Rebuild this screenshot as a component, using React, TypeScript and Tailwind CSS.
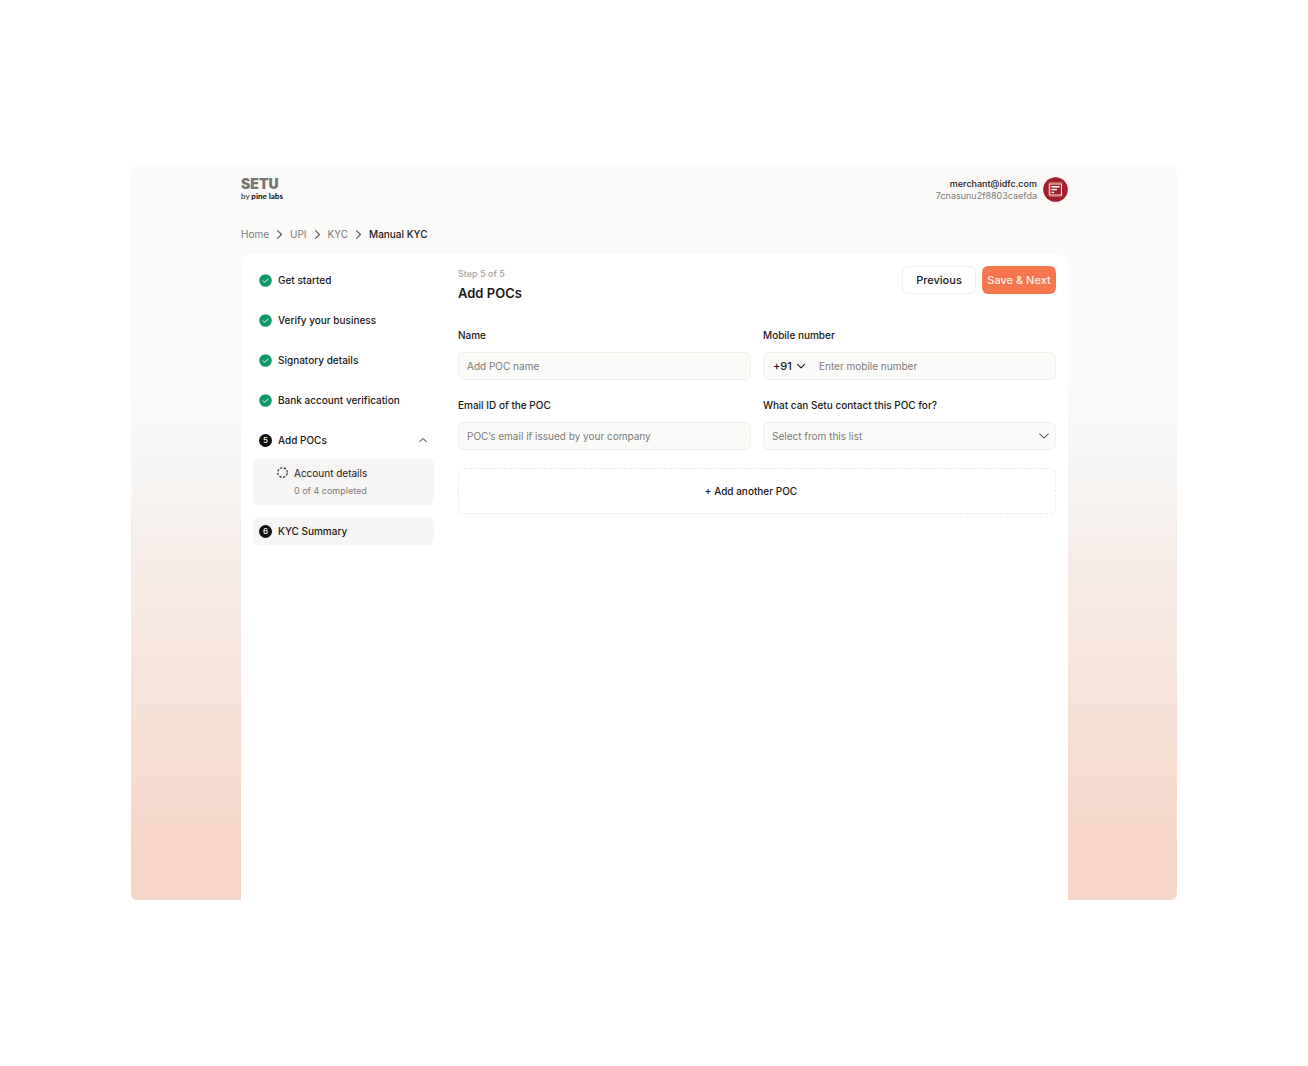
import { Fragment, type ReactNode } from "react";

const FIELD =
  "h-7 w-full rounded-md border border-[#f6ece8] bg-[#fafaf8] text-[10px] text-[#1a1918] outline-none placeholder:text-[#7d7b79] placeholder:opacity-100";

function Chevron({ className, d, width = 1 }: { className: string; d: string; width?: number }) {
  return (
    <svg className={className} viewBox="0 0 10 10" fill="none" stroke="currentColor" strokeWidth={width} strokeLinecap="round" strokeLinejoin="round" aria-hidden="true">
      <path d={d} />
    </svg>
  );
}

function CheckBadge() {
  return (
    <svg className="size-[13px] shrink-0" viewBox="0 0 13 13" fill="none" aria-hidden="true">
      <circle cx="6.5" cy="6.5" r="6.3" fill="#0f9968" />
      <path d="M4 6.8 5.7 8.3 9.1 5" stroke="#e4f3ed" strokeWidth="1" strokeLinecap="round" strokeLinejoin="round" />
    </svg>
  );
}

function NumberBadge({ value }: { value: number }) {
  return (
    <span className="flex size-[13px] shrink-0 items-center justify-center rounded-full bg-[#0d0d0d] text-[8px] leading-none font-medium text-white">
      {value}
    </span>
  );
}

function StepButton({ icon, label, active, open }: { icon: ReactNode; label: string; active?: boolean; open?: boolean }) {
  return (
    <button
      type="button"
      aria-expanded={open}
      className={`flex h-7 w-full items-center gap-[6px] rounded-md px-[6px] text-left text-[10px] font-medium ${active ? "bg-[#f6f5f3]" : ""}`}
    >
      {icon}
      <span>{label}</span>
      {open && <Chevron className="ml-auto size-[10px]" d="M1.8 6.6 5 3.4 8.2 6.6" />}
    </button>
  );
}

function Field({ id, label, children }: { id: string; label: string; children: ReactNode }) {
  return (
    <div className="flex min-w-0 flex-col gap-2">
      <label htmlFor={id} className="text-[10px] leading-[18px] font-medium">
        {label}
      </label>
      {children}
    </div>
  );
}

function Logo() {
  return (
    <a href="#" aria-label="Setu by Pine Labs" className="flex flex-col pt-px">
      <span className="text-[14px] leading-3 font-black text-[#777573]">SETU</span>
      <span className="mt-px font-['Lato'] text-[8px] leading-[10px] text-[#1a1918]">
        by <b className="font-black">pine labs</b>
      </span>
    </a>
  );
}

function Avatar() {
  return (
    <svg className="size-[25px] shrink-0" viewBox="0 0 25 25" fill="none" aria-hidden="true">
      <circle cx="12.5" cy="12.5" r="12.3" fill="#a31f2d" />
      <path d="M6.5 5.6h12.6M6.5 19.4h12.6" stroke="#e8a88f" strokeWidth="1" strokeDasharray="1 1" />
      <path d="M6.5 7h12v11h-12z" stroke="#fbeee9" strokeWidth="1.1" />
      <path d="M6.5 7v11" stroke="#f3bfae" strokeWidth="1.6" />
      <path d="M8.5 9.8h8" stroke="#fff" strokeWidth="1.6" />
      <path d="M8.5 12.6h5.5" stroke="#fff" strokeWidth="1.4" />
      <path d="M8.5 15.4h2.6" stroke="#fff" strokeWidth="1.4" />
    </svg>
  );
}

const DONE = ["Get started", "Verify your business", "Signatory details", "Bank account verification"];
const CRUMBS = ["Home", "UPI", "KYC"];

export default function App() {
  return (
    <div className="flex min-h-screen flex-col bg-white px-[131px] pt-[165px] pb-[166px] font-['Inter',sans-serif] text-[#1a1918]">
      <div className="flex flex-1 flex-col rounded-md bg-[linear-gradient(to_bottom,#fafaf8_30%,#f6f4f2_43%,#f6ebe6_55%,#f6e3da_72%,#f7dcd0_82%,#f6d6c9_93%)] pr-[109px] pl-[110px]">
        <header className="flex items-start justify-between pt-3">
          <Logo />
          <div className="flex items-center gap-[6px]">
            <div className="text-right text-[9px] leading-3">
              <div className="font-medium">merchant@idfc.com</div>
              <div className="text-[#7d7b79]">7cnasunu2f8803caefda</div>
            </div>
            <Avatar />
          </div>
        </header>

        <nav aria-label="Breadcrumb" className="mt-6 flex h-4 items-center gap-[5px] text-[10px] text-[#7d7b79]">
          {CRUMBS.map((crumb) => (
            <Fragment key={crumb}>
              <a href="#">{crumb}</a>
              <Chevron className="size-[11px] text-[#555]" d="M3.2 1.5 6.8 5 3.2 8.5" />
            </Fragment>
          ))}
          <span aria-current="page" className="font-medium text-[#1a1918]">Manual KYC</span>
        </nav>

        <div className="mt-3 flex flex-1 gap-6 rounded-t-xl bg-white p-3">
          <aside className="flex w-[181px] shrink-0 flex-col gap-3">
            {DONE.map((label) => (
              <StepButton key={label} icon={<CheckBadge />} label={label} />
            ))}
            <div>
              <StepButton icon={<NumberBadge value={5} />} label="Add POCs" open />
              <a href="#" className="mt-[5px] flex h-[46px] gap-[6px] rounded-md bg-[#f6f5f3] pt-[5px] pl-6">
                <svg className="mt-[3px] size-[11px] shrink-0" viewBox="0 0 11 11" fill="none" aria-hidden="true">
                  <circle cx="5.5" cy="5.5" r="4.8" stroke="#1a1918" strokeWidth="1.1" strokeDasharray="2.2 1.57" strokeDashoffset="-0.78" />
                </svg>
                <span className="flex flex-col">
                  <span className="text-[10px] leading-[18px]">Account details</span>
                  <span className="text-[9px] leading-[18px] text-[#7d7b79]">0 of 4 completed</span>
                </span>
              </a>
            </div>
            <StepButton icon={<NumberBadge value={6} />} label="KYC Summary" active />
          </aside>

          <main className="min-w-0 flex-1">
            <div className="flex items-start justify-between">
              <div>
                <p className="text-[9px] leading-4 font-medium text-[#a5a3a1]">Step 5 of 5</p>
                <h1 className="text-[13px] leading-[22px] font-semibold">Add POCs</h1>
              </div>
              <div className="flex gap-[6px] text-[11px] font-medium">
                <button type="button" className="h-7 w-[74px] rounded-md border border-[#f6ece8] bg-white">
                  Previous
                </button>
                <button type="button" className="h-7 w-[74px] rounded-md bg-[#f4774e] whitespace-nowrap text-[#fdeee8]">
                  Save &amp; Next
                </button>
              </div>
            </div>

            <form className="mt-[22px]">
              <div className="grid grid-cols-2 gap-x-3 gap-y-4">
                <Field id="poc-name" label="Name">
                  <input id="poc-name" type="text" placeholder="Add POC name" className={`${FIELD} px-2`} />
                </Field>
                <Field id="poc-mobile" label="Mobile number">
                  <div className={`${FIELD} flex items-center`}>
                    <div className="relative">
                      <select aria-label="Country code" className="block h-6 w-[45px] appearance-none bg-transparent pl-[9px] text-[11px] font-medium outline-none">
                        <option>+91</option>
                      </select>
                      <Chevron className="pointer-events-none absolute top-[7px] right-[3px] size-[10px]" d="M1.6 3.4 5 6.8 8.4 3.4" width={1.1} />
                    </div>
                    <input
                      id="poc-mobile"
                      type="tel"
                      placeholder="Enter mobile number"
                      className="h-6 min-w-0 flex-1 bg-transparent pr-2 pl-[10px] outline-none placeholder:text-[#7d7b79] placeholder:opacity-100"
                    />
                  </div>
                </Field>
                <Field id="poc-email" label="Email ID of the POC">
                  <input id="poc-email" type="email" placeholder="POC’s email if issued by your company" className={`${FIELD} px-2`} />
                </Field>
                <Field id="poc-purpose" label="What can Setu contact this POC for?">
                  <div className="relative">
                    <select id="poc-purpose" defaultValue="" className="block h-7 w-full appearance-none rounded-md border border-[#f6ece8] bg-[#fafaf8] px-2 text-[10px] text-[#7d7b79] outline-none">
                      <option value="">Select from this list</option>
                    </select>
                    <Chevron className="pointer-events-none absolute top-2 right-[6px] size-3 text-[#666462]" d="M1.4 3.2 5 6.8 8.6 3.2" width={0.9} />
                  </div>
                </Field>
              </div>
              <button type="button" className="mt-[18px] h-[46px] w-full rounded-md border border-dashed border-[#ece9e7] pr-3 text-[10px] font-medium">
                + Add another POC
              </button>
            </form>
          </main>
        </div>
      </div>
    </div>
  );
}
